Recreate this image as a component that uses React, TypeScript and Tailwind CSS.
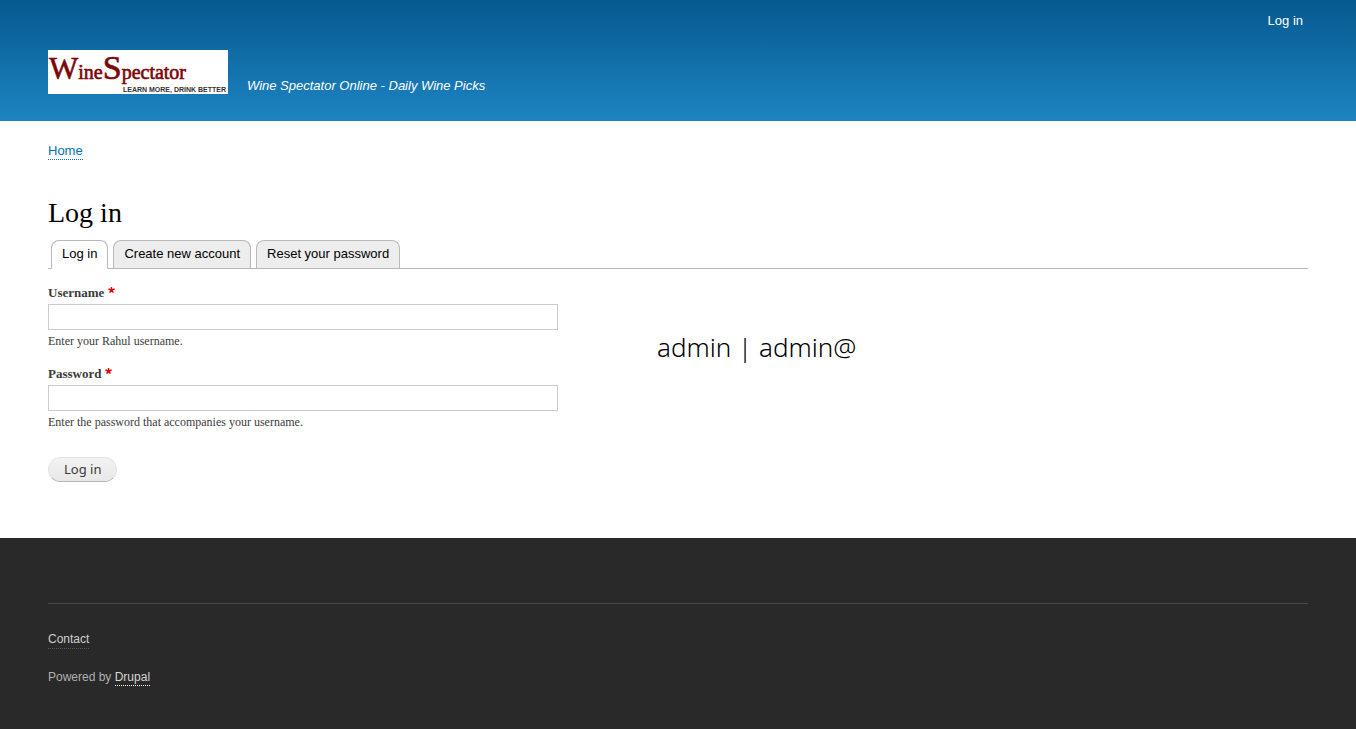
import React from "react";

const sans = "font-['Liberation_Sans',Arial,sans-serif]";

function Logo() {
  return (
    <svg width="180" height="44" viewBox="0 0 180 44" role="img" aria-label="Wine Spectator" className="block">
      <rect width="180" height="44" fill="#fff" />
      <text x="1" y="29" fill="#7b0509" stroke="#7b0509" strokeWidth="0.6" fontSize="20" fontFamily="'Liberation Serif', serif">
        <tspan fontSize="31">W</tspan>
        <tspan>ine</tspan>
        <tspan fontSize="34">S</tspan>
        <tspan>pectator</tspan>
      </text>
      <text x="178" y="42" textAnchor="end" fontSize="7" fontWeight="700" fill="#333" fontFamily="'Liberation Sans', sans-serif">
        LEARN MORE, DRINK BETTER
      </text>
    </svg>
  );
}

function Tab({ label, active = false }: { label: string; active?: boolean }) {
  return (
    <a
      href="#"
      aria-current={active ? "page" : undefined}
      className={`${sans} block rounded-t-lg border border-[#b8b8b8] px-2.5 pb-px text-[13px] leading-[26px] text-black ${
        active ? "-mb-px border-b-white bg-white" : "border-b-0 bg-[#ededed]"
      }`}
    >
      {label}
    </a>
  );
}

function Star() {
  return (
    <svg width="7" height="6" viewBox="0 0 7 6" className="mt-1 ml-1 block" aria-hidden="true">
      <path d="M3.5 3V0M3.5 3L.4 2M3.5 3L6.6 2M3.5 3L1.6 5.7M3.5 3L5.4 5.7" stroke="#e00" strokeWidth="1.4" />
    </svg>
  );
}

function Field({ id, label, type, help }: { id: string; label: string; type: string; help: string }) {
  return (
    <div>
      <label htmlFor={id} className="flex items-start text-[13px] leading-5 font-bold text-[#3b3b3b]">
        {label}
        <Star />
      </label>
      <input
        id={id}
        name={id}
        type={type}
        required
        aria-describedby={`${id}-help`}
        className={`${sans} mt-px block h-[26px] w-full border border-[#ccc] bg-white px-1 text-[13px] text-[#3b3b3b]`}
      />
      <p id={`${id}-help`} className="mt-[3px] text-xs leading-4 text-[#3b3b3b]">
        {help}
      </p>
    </div>
  );
}

export default function App() {
  return (
    <div className="flex min-h-screen flex-col bg-[#292929] font-['Liberation_Serif','Times_New_Roman',serif]">
      <header className={`${sans} bg-linear-to-b from-[#055a8e] to-[#1d84c3] px-12 pb-[27px] text-[13px] text-white`}>
        <nav aria-label="User" className="flex h-[50px] justify-end pt-3 pr-[5px]">
          <a href="#" className="leading-[18px]">Log in</a>
        </nav>
        <div className="flex items-end gap-[19px]">
          <a href="#"><Logo /></a>
          <p className="leading-4 italic">Wine Spectator Online - Daily Wine Picks</p>
        </div>
      </header>

      <main className="bg-white px-12 pb-14">
        <nav aria-label="Breadcrumb" className={`${sans} pt-[22px] text-[13px] leading-4 text-[#0071b3]`}>
          <a href="#" className="inline-block border-b border-dotted border-[#0071b3]">Home</a>
        </nav>
        <h1 className="mt-[35px] text-[28px] leading-9 text-black">Log in</h1>
        <nav aria-label="Tabs" className="mt-[9px] flex gap-[5px] border-b border-[#b8b8b8] px-[3px]">
          <Tab label="Log in" active />
          <Tab label="Create new account" />
          <Tab label="Reset your password" />
        </nav>
        <div className="mt-3.5 flex items-start gap-[99px]">
          <form className="w-[510px]" onSubmit={(e) => e.preventDefault()}>
            <div className="flex flex-col gap-[15px]">
              <Field id="username" label="Username" type="text" help="Enter your Rahul username." />
              <Field id="password" label="Password" type="password" help="Enter the password that accompanies your username." />
            </div>
            <button
              type="submit"
              className="mt-[27px] flex h-[25px] items-start rounded-full border border-[#e4e4e4] border-b-[#b4b4b4] bg-linear-to-b from-[#f3f3f3] to-[#e8e8e8] px-[15px] font-['Noto_Sans',sans-serif] text-[13px] leading-[22px] text-[#3a3a3a]"
            >
              Log in
            </button>
          </form>
          <p className="mt-[46px] font-['Noto_Sans',sans-serif] text-[26px] leading-9 font-light text-black">admin | admin@</p>
        </div>
      </main>

      <footer className={`${sans} px-12 pt-[65px] pb-10 text-xs leading-4 text-[#b0b0b0]`}>
        <div className="border-t border-[#494949] pt-[27px]">
          <a href="#" className="inline-block border-b border-dotted border-[#555] pb-px text-[#cfcfcf]">Contact</a>
          <p className="mt-5">
            Powered by <a href="#" className="inline-block border-b border-dotted border-white text-[#d8d8d8]">Drupal</a>
          </p>
        </div>
      </footer>
    </div>
  );
}
